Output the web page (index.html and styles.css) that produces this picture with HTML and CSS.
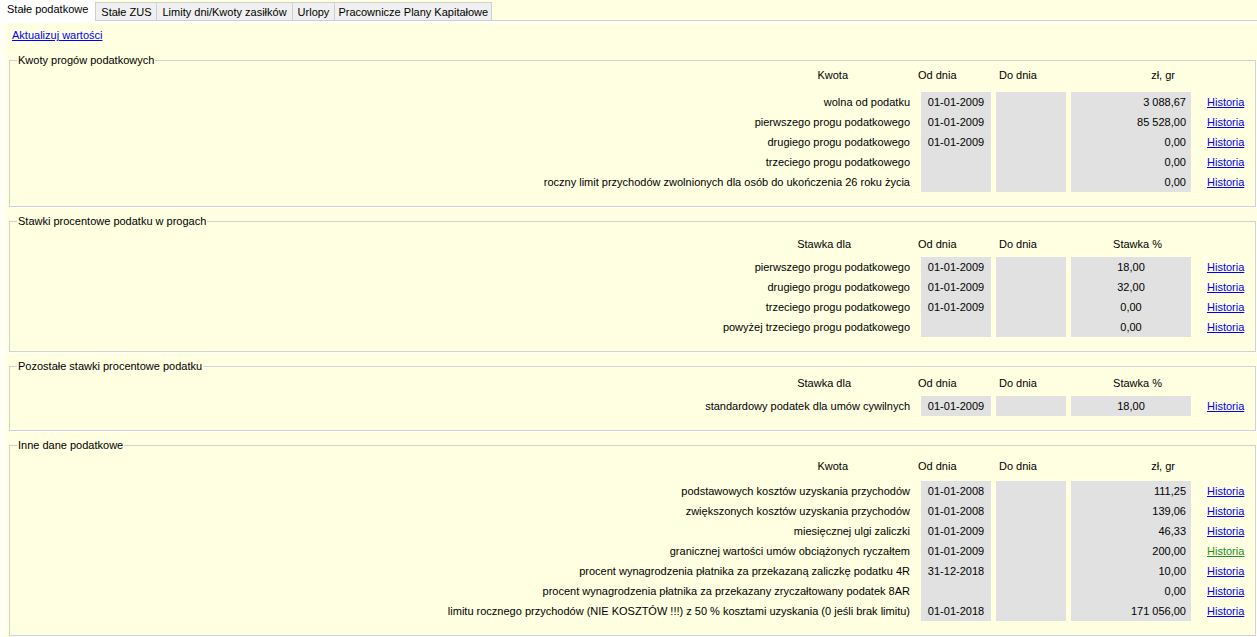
FILE: index.html
```html
<!DOCTYPE html>
<html lang="pl">
<head>
  <meta charset="UTF-8">
  <title>Stałe podatkowe</title>
  <link rel="stylesheet" href="styles.css">
</head>
<body>
  <!-- Tab strip -->
  <div class="tabs">
    <div class="tab active">Stałe podatkowe</div>
    <div class="tab">Stałe ZUS</div>
    <div class="tab">Limity dni/Kwoty zasiłków</div>
    <div class="tab">Urlopy</div>
    <div class="tab">Pracownicze Plany Kapitałowe</div>
  </div>

  <div class="panel">
    <div class="panel-body">
      <a href="#" class="refresh">Aktualizuj wartości</a>

      <!-- Kwoty progów -->
      <fieldset class="group" id="progi">
        <legend>Kwoty progów podatkowych</legend>
        <div class="cols head">
          <span class="h-label">Kwota</span>
          <span class="h-od">Od dnia</span>
          <span class="h-do">Do dnia</span>
          <span class="h-val">zł, gr</span>
          <span></span>
        </div>
        <div class="cols rows">
          <span class="label">wolna od podatku</span>
          <span class="od">01-01-2009</span><span class="do"></span><span class="val">3 088,67</span>
          <a href="#" class="hist">Historia</a>

          <span class="label">pierwszego progu podatkowego</span>
          <span class="od">01-01-2009</span><span class="do"></span><span class="val">85 528,00</span>
          <a href="#" class="hist">Historia</a>

          <span class="label">drugiego progu podatkowego</span>
          <span class="od">01-01-2009</span><span class="do"></span><span class="val">0,00</span>
          <a href="#" class="hist">Historia</a>

          <span class="label">trzeciego progu podatkowego</span>
          <span class="od"></span><span class="do"></span><span class="val">0,00</span>
          <a href="#" class="hist">Historia</a>

          <span class="label">roczny limit przychodów zwolnionych dla osób do ukończenia 26 roku życia</span>
          <span class="od"></span><span class="do"></span><span class="val">0,00</span>
          <a href="#" class="hist">Historia</a>
        </div>
      </fieldset>

      <!-- Stawki w progach -->
      <fieldset class="group rates" id="stawki">
        <legend>Stawki procentowe podatku w progach</legend>
        <div class="cols head">
          <span class="h-label">Stawka dla</span>
          <span class="h-od">Od dnia</span>
          <span class="h-do">Do dnia</span>
          <span class="h-val">Stawka %</span>
          <span></span>
        </div>
        <div class="cols rows">
          <span class="label">pierwszego progu podatkowego</span>
          <span class="od">01-01-2009</span><span class="do"></span><span class="val">18,00</span>
          <a href="#" class="hist">Historia</a>

          <span class="label">drugiego progu podatkowego</span>
          <span class="od">01-01-2009</span><span class="do"></span><span class="val">32,00</span>
          <a href="#" class="hist">Historia</a>

          <span class="label">trzeciego progu podatkowego</span>
          <span class="od">01-01-2009</span><span class="do"></span><span class="val">0,00</span>
          <a href="#" class="hist">Historia</a>

          <span class="label">powyżej trzeciego progu podatkowego</span>
          <span class="od"></span><span class="do"></span><span class="val">0,00</span>
          <a href="#" class="hist">Historia</a>
        </div>
      </fieldset>

      <!-- Pozostałe stawki -->
      <fieldset class="group rates" id="pozostale">
        <legend>Pozostałe stawki procentowe podatku</legend>
        <div class="cols head">
          <span class="h-label">Stawka dla</span>
          <span class="h-od">Od dnia</span>
          <span class="h-do">Do dnia</span>
          <span class="h-val">Stawka %</span>
          <span></span>
        </div>
        <div class="cols rows">
          <span class="label">standardowy podatek dla umów cywilnych</span>
          <span class="od">01-01-2009</span><span class="do"></span><span class="val">18,00</span>
          <a href="#" class="hist">Historia</a>
        </div>
      </fieldset>

      <!-- Inne dane -->
      <fieldset class="group" id="inne">
        <legend>Inne dane podatkowe</legend>
        <div class="cols head">
          <span class="h-label">Kwota</span>
          <span class="h-od">Od dnia</span>
          <span class="h-do">Do dnia</span>
          <span class="h-val">zł, gr</span>
          <span></span>
        </div>
        <div class="cols rows">
          <span class="label">podstawowych kosztów uzyskania przychodów</span>
          <span class="od">01-01-2008</span><span class="do"></span><span class="val">111,25</span>
          <a href="#" class="hist">Historia</a>

          <span class="label">zwiększonych kosztów uzyskania przychodów</span>
          <span class="od">01-01-2008</span><span class="do"></span><span class="val">139,06</span>
          <a href="#" class="hist">Historia</a>

          <span class="label">miesięcznej ulgi zaliczki</span>
          <span class="od">01-01-2009</span><span class="do"></span><span class="val">46,33</span>
          <a href="#" class="hist">Historia</a>

          <span class="label">granicznej wartości umów obciążonych ryczałtem</span>
          <span class="od">01-01-2009</span><span class="do"></span><span class="val">200,00</span>
          <a href="#" class="hist visited">Historia</a>

          <span class="label">procent wynagrodzenia płatnika za przekazaną zaliczkę podatku 4R</span>
          <span class="od">31-12-2018</span><span class="do"></span><span class="val">10,00</span>
          <a href="#" class="hist">Historia</a>

          <span class="label">procent wynagrodzenia płatnika za przekazany zryczałtowany podatek 8AR</span>
          <span class="od"></span><span class="do"></span><span class="val">0,00</span>
          <a href="#" class="hist">Historia</a>

          <span class="label">limitu rocznego przychodów (NIE KOSZTÓW !!!) z 50 % kosztami uzyskania (0 jeśli brak limitu)</span>
          <span class="od">01-01-2018</span><span class="do"></span><span class="val">171 056,00</span>
          <a href="#" class="hist">Historia</a>
        </div>
      </fieldset>
    </div>
  </div>
</body>
</html>
```

FILE: styles.css
```css
/* General */
body {
  margin: 0;
  background: #ffffe1;
  color: #000;
  font-family: "Liberation Sans", Arial, sans-serif;
  font-size: 11px;
}
a {
  color: #0000ff;
  text-decoration: underline;
}

/* Tabs */
.tabs {
  display: flex;
  align-items: flex-end;
  height: 20px;
}
.tab {
  height: 18px;
  line-height: 19px;
  padding: 0 5px;
  background: #f0f0f0;
  border: 1px solid #cfcfcf;
  border-bottom: none;
  border-right: none;
  box-sizing: border-box;
  white-space: nowrap;
}
.tab:last-child {
  padding: 0 3px;
  border-right: 1px solid #cfcfcf;
}
.tab.active {
  height: 21px;
  line-height: 19px;
  margin-bottom: -1px;
  padding: 0 7px;
  background: #fff;
  border: none;
  position: relative;
}

/* Panel */
.panel {
  border-top: 1px solid #cfcfcf;
  border-left: 6px solid #fffff4;
}
.panel-body {
  border-top: 2px solid #fff;
  padding: 5px 1px 0 0;
}
.refresh {
  display: inline-block;
  line-height: 14px;
  margin: 0 0 11px 6px;
}

/* Group boxes */
.group {
  margin: 0 0 7px 3px;
  padding: 0 0 14px;
  border: 1px solid #d2d2d2;
  box-shadow: 1px 1px 0 #fff;
  min-width: 0;
}
.group legend {
  margin-left: 7px;
  padding: 0 1px;
  line-height: 14px;
}

.cols {
  display: grid;
  grid-template-columns: 1fr 70px 70px 120px 59px;
  column-gap: 5px;
}
.head {
  line-height: 16px;
  white-space: nowrap;
}
.h-label {
  text-align: right;
  padding-right: 68px;
}
.h-od {
  margin-left: -3px;
}
.h-do {
  padding-left: 3px;
}
.h-val {
  text-align: right;
  padding-right: 16px;
}
.rates .h-label {
  padding-right: 65px;
}
.rates .h-val {
  padding-right: 29px;
}

#progi .head { margin: 0 0 9px; }
#stawki .head { margin: 8px 0 5px; }
#pozostale .head { margin: 2px 0 5px; }
#inne .head { margin: 6px 0 7px; }

/* Data rows */
.rows span,
.rows a {
  height: 20px;
  line-height: 20px;
  white-space: nowrap;
}
.label {
  text-align: right;
  padding-right: 6px;
}
.od,
.do,
.val {
  background: #e1e1e1;
}
.od {
  text-align: center;
}
.val {
  text-align: right;
  padding-right: 5px;
}
.rates .val {
  text-align: center;
  padding-right: 0;
}
.hist {
  justify-self: start;
  margin-left: 11px;
}
.hist.visited {
  color: #1f8f1f;
}
```
